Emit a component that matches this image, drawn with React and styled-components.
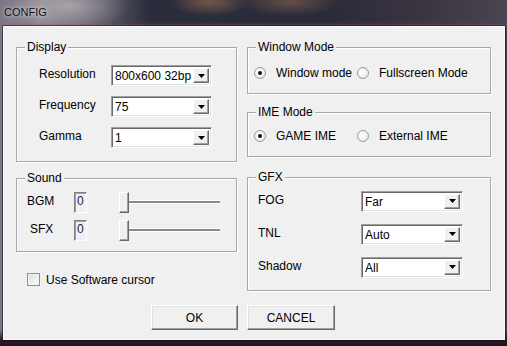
import React from 'react';
import styled, { createGlobalStyle } from 'styled-components';

const GlobalStyle = createGlobalStyle`
  html, body { margin: 0; padding: 0; background: #2a2632; }
  * { box-sizing: border-box; }
`;

const Frame = styled.div`
  width: 507px;
  height: 346px;
  display: flex;
  flex-direction: column;
  font-family: "Liberation Sans", Arial, sans-serif;
  font-size: 12px;
  color: #000;
  background:
    radial-gradient(ellipse 60px 24px at 70px 6px, rgba(210, 200, 205, 0.55), transparent),
    radial-gradient(ellipse 40px 14px at 210px 2px, rgba(200, 140, 90, 0.45), transparent),
    radial-gradient(ellipse 50px 14px at 290px 2px, rgba(190, 130, 90, 0.4), transparent),
    linear-gradient(180deg, transparent 0, transparent 330px, #2b1624 340px, #241420 346px),
    linear-gradient(90deg, #7a7884 0, #8a8690 40px, #5e5c68 100px, #2c2d3c 150px, #2a2b3a 330px, #3b3440 420px, #4a4452 507px);
`;

const TitleBar = styled.div`
  height: 26px;
  flex: none;
  display: flex;
  align-items: center;
  padding: 0 0 2px 4px;
  font-size: 11px;
  color: #0a0a14;
  text-shadow: 0 0 6px rgba(255, 255, 255, 0.75), 0 0 2px rgba(255, 255, 255, 0.6);
  box-shadow: inset 0 -2px 2px rgba(170, 90, 120, 0.35);
`;

const Client = styled.div`
  flex: 1;
  margin: 0 2px 6px 3px;
  background: #f0f0f0;
  border: 1px solid #fcfcfc;
  box-shadow: 0 0 0 1px rgba(20, 10, 20, 0.55);
  padding: 20px 0 0 12px;
  display: flex;
  flex-direction: column;
`;

const Columns = styled.div`
  display: grid;
  grid-template-columns: 221px 244px;
  column-gap: 10px;
  align-items: start;
`;

const Column = styled.div`
  display: flex;
  flex-direction: column;
`;

const Group = styled.div`
  display: flex;
  flex-direction: column;
  border: 1px solid #a8a8a8;
  box-shadow: 1px 1px 0 #fff, inset 1px 1px 0 #fff;
  margin-top: ${p => p.$top || 0}px;
  padding-bottom: ${p => p.$bottom || 0}px;
`;

const Caption = styled.div`
  align-self: flex-start;
  margin: -8px 0 0 8px;
  padding: 0 2px;
  line-height: 14px;
  background: #f0f0f0;
`;

const FieldGrid = styled.div`
  display: grid;
  grid-template-columns: ${p => p.$label}px ${p => p.$field}px;
  grid-auto-rows: ${p => p.$row}px;
  row-gap: ${p => p.$gap}px;
  align-items: center;
  margin-top: ${p => p.$top}px;
  padding-left: ${p => p.$left}px;
`;

const Label = styled.span`
  line-height: 14px;
  margin-top: -3px;
  padding-left: ${p => p.$indent || 0}px;
`;

const SelectBox = styled.div`
  height: 21px;
  display: flex;
  background: #fff;
  border: 1px solid;
  border-color: #a0a0a0 #fff #fff #a0a0a0;
  box-shadow: inset 1px 1px 0 #696969, inset -1px -1px 0 #e3e3e3;
  padding: 2px;
`;

const SelectValue = styled.span`
  flex: 1;
  overflow: hidden;
  white-space: nowrap;
  line-height: 17px;
  padding-left: 1px;
`;

const DropButton = styled.span`
  width: 16px;
  flex: none;
  display: flex;
  align-items: center;
  justify-content: center;
  background: #f0f0f0;
  border: 1px solid;
  border-color: #fff #696969 #696969 #fff;
  box-shadow: inset -1px -1px 0 #a0a0a0;
`;

const Select = ({ value }) => (
  <SelectBox>
    <SelectValue>{value}</SelectValue>
    <DropButton>
      <svg width="7" height="4" viewBox="0 0 7 4">
        <polygon points="0,0 7,0 3.5,4" fill="#000" />
      </svg>
    </DropButton>
  </SelectBox>
);

const RadioRow = styled.div`
  display: grid;
  grid-template-columns: 103px auto;
  margin-top: ${p => p.$top}px;
  padding-left: 6px;
  height: 14px;
`;

const RadioOption = styled.label`
  display: flex;
  align-items: center;
  gap: 10px;
  line-height: 14px;
  white-space: nowrap;
`;

const RadioDot = styled.span`
  width: 12px;
  height: 12px;
  border-radius: 50%;
  border: 1px solid #9a9b9c;
  background: radial-gradient(circle at 40% 40%, #fff 0, #f2f2f2 50%, #dcdcdc 100%);
  display: flex;
  align-items: center;
  justify-content: center;
  &::after {
    content: '';
    width: 4px;
    height: 4px;
    border-radius: 50%;
    background: ${p => (p.$on ? '#111' : 'transparent')};
  }
`;

const Radio = ({ on, children }) => (
  <RadioOption>
    <RadioDot $on={on} />
    {children}
  </RadioOption>
);

const SoundGrid = styled.div`
  display: grid;
  grid-template-columns: 47px 13px 133px;
  grid-auto-rows: 22px;
  row-gap: 6px;
  align-items: center;
  margin-top: 6px;
  padding-left: 10px;
`;

const ValueBox = styled.span`
  width: 13px;
  height: 21px;
  border: 1px solid;
  border-color: #808080 #fff #fff #808080;
  box-shadow: inset 1px 1px 0 #a0a0a0;
  padding: 1px 0 0 2px;
  line-height: 14px;
  color: #1a1a3a;
`;

const Slider = styled.div`
  padding-left: 32px;
  display: flex;
  align-items: center;
  height: 21px;
`;

const Thumb = styled.span`
  width: 10px;
  height: 21px;
  flex: none;
  background: #f0f0f0;
  border: 1px solid;
  border-color: #fff #696969 #696969 #fff;
  box-shadow: inset -1px -1px 0 #a0a0a0;
`;

const Track = styled.span`
  flex: 1;
  height: 4px;
  border-top: 1px solid #fff;
  border-bottom: 1px solid #fff;
  background: #8a8a8a;
`;

const CheckRow = styled.label`
  display: flex;
  align-items: center;
  gap: 6px;
  margin: 21px 0 0 11px;
  height: 13px;
`;

const CheckBox = styled.span`
  width: 13px;
  height: 13px;
  border: 1px solid #8e8f8f;
  background: linear-gradient(135deg, #dcdcdc, #fff);
  box-shadow: inset 0 0 0 1px #f4f4f4;
`;

const ButtonRow = styled.div`
  display: flex;
  gap: 9px;
  margin: 14px 0 0 135px;
`;

const Button = styled.button`
  width: ${p => p.$w}px;
  height: 25px;
  font-family: inherit;
  font-size: 12px;
  color: #000;
  background: #f0f0f0;
  border: 1px solid;
  border-color: #fff #696969 #696969 #fff;
  box-shadow: inset -1px -1px 0 #a0a0a0, inset 1px 1px 0 #e3e3e3;
  padding: 0;
`;

export default function App() {
  return (
    <>
      <GlobalStyle />
      <Frame>
        <TitleBar>CONFIG</TitleBar>
        <Client>
          <Columns>
            <Column>
              <Group $bottom={13}>
                <Caption>Display</Caption>
                <FieldGrid $label={72} $field={101} $row={21} $gap={10} $top={11} $left={22}>
                  <Label>Resolution</Label>
                  <Select value="800x600 32bp" />
                  <Label>Frequency</Label>
                  <Select value="75" />
                  <Label>Gamma</Label>
                  <Select value="1" />
                </FieldGrid>
              </Group>
              <Group $top={16} $bottom={10}>
                <Caption>Sound</Caption>
                <SoundGrid>
                  <Label>BGM</Label>
                  <ValueBox>0</ValueBox>
                  <Slider><Thumb /><Track /></Slider>
                  <Label $indent={3}>SFX</Label>
                  <ValueBox>0</ValueBox>
                  <Slider><Thumb /><Track /></Slider>
                </SoundGrid>
              </Group>
              <CheckRow>
                <CheckBox />
                Use Software cursor
              </CheckRow>
            </Column>
            <Column>
              <Group $bottom={13}>
                <Caption>Window Mode</Caption>
                <RadioRow $top={12}>
                  <Radio on>Window mode</Radio>
                  <Radio>Fullscreen Mode</Radio>
                </RadioRow>
              </Group>
              <Group $top={18} $bottom={13}>
                <Caption>IME Mode</Caption>
                <RadioRow $top={10}>
                  <Radio on>GAME IME</Radio>
                  <Radio>External IME</Radio>
                </RadioRow>
              </Group>
              <Group $top={20} $bottom={12}>
                <Caption>GFX</Caption>
                <FieldGrid $label={103} $field={102} $row={22} $gap={11} $top={6} $left={10}>
                  <Label>FOG</Label>
                  <Select value="Far" />
                  <Label>TNL</Label>
                  <Select value="Auto" />
                  <Label>Shadow</Label>
                  <Select value="All" />
                </FieldGrid>
              </Group>
            </Column>
          </Columns>
          <ButtonRow>
            <Button $w={87}>OK</Button>
            <Button $w={88}>CANCEL</Button>
          </ButtonRow>
        </Client>
      </Frame>
    </>
  );
}
